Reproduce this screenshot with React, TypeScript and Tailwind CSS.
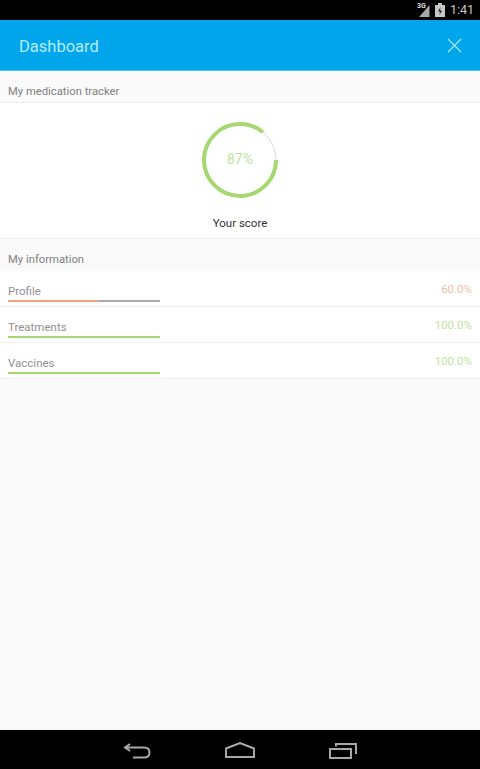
import React from "react";

const rows = [
  { label: "Profile", value: "60.0%", bar: 60, color: "bg-[#f0a47e]", text: "text-[#f2bf9f]" },
  { label: "Treatments", value: "100.0%", bar: 100, color: "bg-[#a5d96f]", text: "text-[#bfe3a0]" },
  { label: "Vaccines", value: "100.0%", bar: 100, color: "bg-[#a5d96f]", text: "text-[#bfe3a0]" },
];

const StatusBar = () => (
  <div className="h-5 bg-black flex items-center justify-end pr-[6px]">
    <div className="relative w-[13px] h-[16px]">
      <svg width="13" height="16" viewBox="0 0 13 16" className="absolute inset-0">
        <path d="M12.5 3 V15 H2 Z" fill="#a8a8a8" />
      </svg>
      <span className="absolute left-0 top-0 text-[7px] leading-[8px] text-[#ddd] font-bold">3G</span>
    </div>
    <svg width="10" height="14" viewBox="0 0 10 14" className="ml-[5px]">
      <path d="M3 0 H7 V2 H10 V14 H0 V2 H3 Z" fill="#c8c8c8" />
      <path d="M5.5 4 L3 8.5 H5 L4.5 12 L7 7.5 H5 Z" fill="#222" />
    </svg>
    <span className="text-[12.5px] leading-5 text-[#c8c8c8] ml-[5px]">1:41</span>
  </div>
);

const ScoreRing = () => (
  <div className="relative w-[80px] h-[80px]">
    <svg width="80" height="80" viewBox="0 0 80 80" className="-rotate-90">
      <circle cx="40" cy="40" r="36" fill="none" stroke="#d8d8d8" strokeWidth="1" />
      <circle
        cx="40"
        cy="40"
        r="36"
        fill="none"
        stroke="#a5d96f"
        strokeWidth="4"
        pathLength="100"
        strokeDasharray="86 14"
        strokeDashoffset="-25"
      />
    </svg>
    <div className="absolute inset-0 pb-[2px] flex items-center justify-center text-[14px] text-[#bfe3a0]">87%</div>
  </div>
);

const NavBar = () => (
  <div className="h-[39px] bg-black flex items-center justify-center gap-[74px]">
    <svg width="28" height="16" viewBox="0 0 28 16" fill="none" stroke="#a8a8a8" strokeWidth="2" className="mt-[3px]">
      <path d="M7 1 L2 4.5 L7 8 M2 4.5 H21 C25 4.5 26.5 6.5 26.5 9.5 C26.5 12.5 25 14.5 21 14.5 H10" />
    </svg>
    <svg width="30" height="16" viewBox="0 0 30 16" fill="none" stroke="#a8a8a8" strokeWidth="2" className="mt-[1px]">
      <path d="M1 6.5 L15 1 L29 6.5 V15 H1 Z" />
    </svg>
    <svg width="28" height="16" viewBox="0 0 28 16" fill="none" stroke="#a8a8a8" strokeWidth="2" className="mt-[2px]">
      <path d="M7 3.5 V1 H27 V11" />
      <rect x="1" y="6" width="21" height="9" />
    </svg>
  </div>
);

export default function App() {
  return (
    <div className="w-[480px] h-[769px] flex flex-col bg-[#fafafa] font-['Roboto',sans-serif]">
      <StatusBar />
      <header className="h-[51px] bg-[#00a5ec] flex items-center justify-between pl-[19px] pr-[18px] border-b border-[#4fc3f2]">
        <h1 className="pt-1 text-[16.5px] text-[#b5ecff]">Dashboard</h1>
        <svg width="15" height="15" viewBox="0 0 15 15" stroke="#a8e8ff" strokeWidth="1.2">
          <path d="M1 1 L14 14 M14 1 L1 14" />
        </svg>
      </header>

      <main className="flex-1 flex flex-col">
        <div className="h-[32px] flex items-center px-2 pt-3 text-[11.25px] text-[#808080] border-b border-[#eeeeee]">
          My medication tracker
        </div>
        <section className="h-[136px] bg-white flex flex-col items-center pt-[17px] border-b border-[#eeeeee]">
          <ScoreRing />
          <p className="mt-[16px] text-[11.5px] leading-[14px] text-[#333]">Your score</p>
        </section>
        <div className="h-[32px] flex items-center px-2 pt-[10px] text-[11.25px] text-[#808080]">My information</div>
        <section className="bg-white">
          {rows.map((row) => (
            <div key={row.label} className="h-[36px] flex justify-between px-2 border-b border-[#eeeeee]">
              <div className="w-[152px] pt-[13px]">
                <div className="text-[11.5px] leading-[14px] text-[#909090]">{row.label}</div>
                <div className="h-[2px] mt-[2px] bg-[#aaaaaa]">
                  <div className={`h-full ${row.color}`} style={{ width: `${row.bar}%` }} />
                </div>
              </div>
              <div className={`pt-[11px] text-[11.5px] leading-[14px] ${row.text}`}>{row.value}</div>
            </div>
          ))}
        </section>
      </main>

      <NavBar />
    </div>
  );
}
